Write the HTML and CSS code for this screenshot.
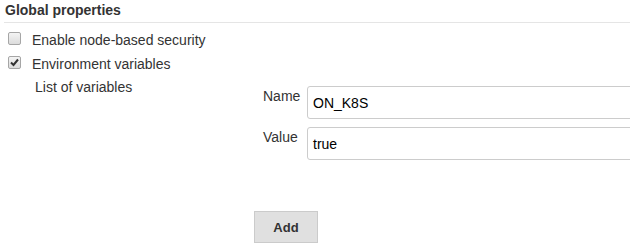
FILE: index.html
```html
<!DOCTYPE html>
<html>
<head>
<meta charset="utf-8">
<link rel="stylesheet" href="styles.css">
</head>
<body>
<div class="page">
  <div class="section-header">Global properties</div>
  <div class="opt-row first">
    <span class="cb"></span>
    <span class="opt-label">Enable node-based security</span>
  </div>
  <div class="opt-row">
    <span class="cb checked"><svg width="9" height="9" viewBox="0 0 9 9"><path d="M1 4.5 L3.5 7 L8 1.5" fill="none" stroke="#333" stroke-width="2"/></svg></span>
    <span class="opt-label">Environment variables</span>
  </div>
  <div class="nested">
    <div class="list-label">List of variables</div>
    <div class="repeat">
      <div class="field">
        <span class="field-label">Name</span>
        <div class="input">ON_K8S</div>
      </div>
      <div class="field">
        <span class="field-label">Value</span>
        <div class="input">true</div>
      </div>
      <button class="add-btn">Add</button>
    </div>
  </div>
</div>
</body>
</html>
```

FILE: styles.css
```css
html, body {
  margin: 0;
  padding: 0;
  background: #fff;
  overflow: hidden;
}
body {
  font-family: "Liberation Sans", Arial, sans-serif;
  font-size: 14px;
  color: #333;
  width: 630px;
  height: 248px;
}
.page {
  padding-top: 2px;
}
.section-header {
  font-weight: bold;
  line-height: 16px;
  padding-left: 1px;
  margin-left: 4px;
  padding-bottom: 4px;
  border-bottom: 1px solid #e5e5e5;
}
.opt-row {
  display: flex;
  align-items: center;
  height: 24px;
  padding-left: 8px;
}
.opt-row.first {
  margin-top: 5px;
}
.cb {
  box-sizing: border-box;
  flex-shrink: 0;
  width: 13px;
  height: 13px;
  border: 1px solid #a6a6a6;
  border-radius: 2px;
  background: linear-gradient(#f4f4f4, #dcdcdc);
  display: flex;
  align-items: center;
  justify-content: center;
  margin-right: 11px;
  margin-bottom: 4px;
}
.opt-label {
  line-height: 16px;
}
.nested {
  display: flex;
  padding-left: 35px;
  margin-top: 1px;
}
.list-label {
  flex-shrink: 0;
  width: 219px;
  line-height: 16px;
  padding-top: 2px;
}
.repeat {
  flex-shrink: 0;
  display: flex;
  flex-direction: column;
  padding-top: 9px;
}
.field {
  display: flex;
  margin-bottom: 8px;
}
.field-label {
  flex-shrink: 0;
  width: 44px;
  padding-left: 9px;
  padding-top: 2px;
  line-height: 16px;
}
.input {
  box-sizing: border-box;
  flex-shrink: 0;
  width: 340px;
  height: 33px;
  border: 1px solid #ccc;
  border-radius: 3px;
  padding-left: 5px;
  display: flex;
  align-items: center;
  color: #000;
  font-size: 14px;
}
.add-btn {
  margin-top: 43px;
  align-self: flex-start;
  width: 64px;
  height: 32px;
  border: 1px solid #cbcbcb;
  background: #e0e0e0;
  font-family: "Liberation Sans", Arial, sans-serif;
  font-weight: bold;
  font-size: 13px;
  color: #333;
  border-radius: 0;
  padding: 0;
}
```
